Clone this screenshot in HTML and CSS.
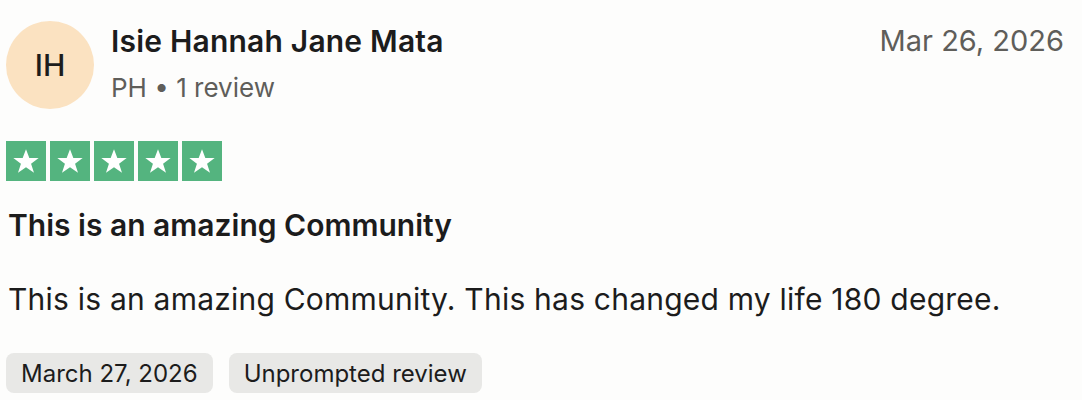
FILE: index.html
```html
<!DOCTYPE html>
<html lang="en">
<head>
  <meta charset="UTF-8">
  <meta name="viewport" content="width=device-width, initial-scale=1.0">
  <title>Review</title>
  <link rel="stylesheet" href="styles.css">
</head>
<body>
  <article class="review">
    <header class="review-header">
      <div class="avatar">IH</div>
      <div class="author">
        <div class="author-name">Isie Hannah Jane Mata</div>
        <div class="author-meta">PH &bull; 1 review</div>
      </div>
      <time class="review-date">Mar 26, 2026</time>
    </header>

    <div class="stars">
      <span class="star"><svg viewBox="0 0 24 24"><path d="M12 3.2l2.5 6.6h7l-5.7 4.2 2.2 6.8L12 16.6l-6 4.2 2.2-6.8-5.7-4.2h7z"/></svg></span>
      <span class="star"><svg viewBox="0 0 24 24"><path d="M12 3.2l2.5 6.6h7l-5.7 4.2 2.2 6.8L12 16.6l-6 4.2 2.2-6.8-5.7-4.2h7z"/></svg></span>
      <span class="star"><svg viewBox="0 0 24 24"><path d="M12 3.2l2.5 6.6h7l-5.7 4.2 2.2 6.8L12 16.6l-6 4.2 2.2-6.8-5.7-4.2h7z"/></svg></span>
      <span class="star"><svg viewBox="0 0 24 24"><path d="M12 3.2l2.5 6.6h7l-5.7 4.2 2.2 6.8L12 16.6l-6 4.2 2.2-6.8-5.7-4.2h7z"/></svg></span>
      <span class="star"><svg viewBox="0 0 24 24"><path d="M12 3.2l2.5 6.6h7l-5.7 4.2 2.2 6.8L12 16.6l-6 4.2 2.2-6.8-5.7-4.2h7z"/></svg></span>
    </div>

    <h2 class="review-title">This is an amazing Community</h2>
    <p class="review-text">This is an amazing Community. This has changed my life 180 degree.</p>

    <div class="tags">
      <span class="tag">March 27, 2026</span>
      <span class="tag">Unprompted review</span>
    </div>
  </article>
</body>
</html>
```

FILE: styles.css
```css
body {
  margin: 0;
  background-color: #fdfdfc;
  font-family: Inter, "Noto Sans", sans-serif;
  color: #1c1c1c;
}
.review {
  padding: 21px 18px 0 6px;
}
.review-header {
  display: flex;
  align-items: flex-start;
}
.avatar {
  width: 88px;
  height: 88px;
  border-radius: 50%;
  background-color: #fbe2c1;
  display: flex;
  align-items: center;
  justify-content: center;
  font-size: 30px;
  font-weight: 500;
  flex-shrink: 0;
}
.author {
  margin-left: 17px;
  flex: 1;
}
.author-name {
  font-size: 30px;
  font-weight: 600;
  line-height: 40px;
  letter-spacing: 0.2px;
}
.author-meta {
  font-size: 26px;
  color: #5f5e5a;
  line-height: 38px;
  margin-top: 8px;
}
.review-date {
  font-size: 29px;
  color: #5f5e5a;
  line-height: 40px;
}
.stars {
  display: flex;
  gap: 4px;
  margin-top: 32px;
}
.star {
  width: 40px;
  height: 40px;
  background-color: #54b47f;
  display: flex;
  align-items: center;
  justify-content: center;
}
.star svg {
  width: 32px;
  height: 32px;
  fill: #fff;
}
.review-title {
  font-size: 30px;
  font-weight: 600;
  margin: 24px 0 0 2px;
  line-height: 40px;
}
.review-text {
  font-size: 30px;
  letter-spacing: 0.22px;
  margin: 34px 0 0 2px;
  line-height: 40px;
}
.tags {
  display: flex;
  gap: 16px;
  margin-top: 34px;
}
.tag {
  background-color: #e8e8e6;
  border-radius: 8px;
  height: 40px;
  padding: 0 15px;
  display: flex;
  align-items: center;
  font-size: 24px;
}
```
